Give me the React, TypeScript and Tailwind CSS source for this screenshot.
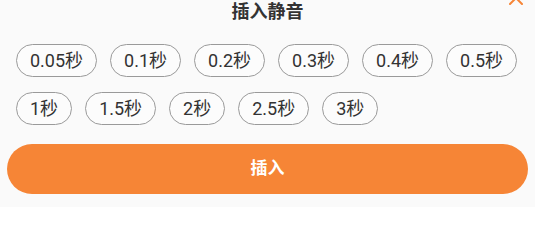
import React from "react";

const options = ["0.05秒", "0.1秒", "0.2秒", "0.3秒", "0.4秒", "0.5秒", "1秒", "1.5秒", "2秒", "2.5秒", "3秒"];

export default function App() {
  return (
    <div
      className="relative w-[535px] h-[207px] overflow-hidden bg-[#fafafa]"
      style={{ fontFamily: "Roboto, 'Noto Sans CJK SC', sans-serif" }}
    >
      {/* close icon, cut off by the top edge */}
      <svg
        className="absolute top-[-9px] right-[12px]"
        width="14"
        height="14"
        viewBox="0 0 14 14"
        fill="none"
        stroke="#f68536"
        strokeWidth="2"
        strokeLinecap="round"
      >
        <path d="M1 1 L13 13 M13 1 L1 13" />
      </svg>

      <div className="h-[24px] leading-[24px] text-center text-[18px] font-bold text-[#333]">
        插入静音
      </div>

      <div className="mt-[20px] px-[16px] flex flex-wrap gap-x-[13px] gap-y-[15px]">
        {options.map((o) => (
          <button
            key={o}
            className="h-[33px] px-[13px] rounded-full border border-[#9a9a9a] bg-[#fcfcfc] text-[18px] leading-none text-[#333]"
          >
            {o}
          </button>
        ))}
      </div>

      <div className="mt-[19px] px-[7px]">
        <button className="w-full h-[50px] rounded-full bg-[#f68536] text-white text-[17px] font-bold">
          插入
        </button>
      </div>
    </div>
  );
}
